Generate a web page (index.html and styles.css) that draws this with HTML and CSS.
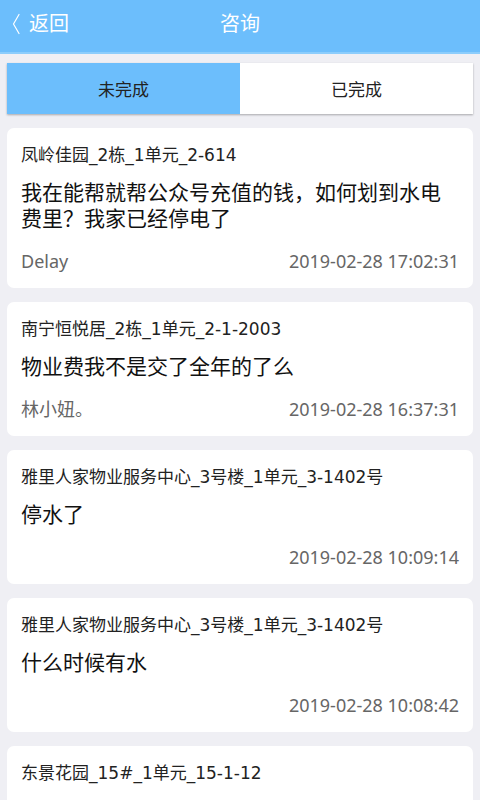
FILE: index.html
```html
<!DOCTYPE html>
<html lang="zh-CN">
<head>
    <meta charset="UTF-8">
    <meta name="viewport" content="width=device-width, initial-scale=1.0">
    <title>咨询</title>
    <link rel="stylesheet" href="styles.css">
</head>
<body>
    <header class="topbar">
        <a class="back" href="#">
            <svg class="back-icon" width="8" height="22" viewBox="0 0 8 22">
                <polyline points="7,1.5 1.5,11 7,20.5" fill="none" stroke="#fff" stroke-width="1.2" stroke-linejoin="round" stroke-linecap="round"/>
            </svg>
            <span>返回</span>
        </a>
        <h1 class="title">咨询</h1>
        <span></span>
    </header>

    <div class="tabs">
        <div class="tab active">未完成</div>
        <div class="tab">已完成</div>
    </div>

    <ul class="list">
        <li class="card">
            <div class="card-title">凤岭佳园_2栋_1单元_2-614</div>
            <div class="card-body">我在能帮就帮公众号充值的钱，如何划到水电费里？我家已经停电了</div>
            <div class="card-foot">
                <span class="author">Delay</span>
                <span class="time">2019-02-28 17:02:31</span>
            </div>
        </li>
        <li class="card">
            <div class="card-title">南宁恒悦居_2栋_1单元_2-1-2003</div>
            <div class="card-body">物业费我不是交了全年的了么</div>
            <div class="card-foot">
                <span class="author">林小妞。</span>
                <span class="time">2019-02-28 16:37:31</span>
            </div>
        </li>
        <li class="card">
            <div class="card-title">雅里人家物业服务中心_3号楼_1单元_3-1402号</div>
            <div class="card-body">停水了</div>
            <div class="card-foot">
                <span class="author"></span>
                <span class="time">2019-02-28 10:09:14</span>
            </div>
        </li>
        <li class="card">
            <div class="card-title">雅里人家物业服务中心_3号楼_1单元_3-1402号</div>
            <div class="card-body">什么时候有水</div>
            <div class="card-foot">
                <span class="author"></span>
                <span class="time">2019-02-28 10:08:42</span>
            </div>
        </li>
        <li class="card">
            <div class="card-title">东景花园_15#_1单元_15-1-12</div>
            <div class="card-body">我们楼下燃气管道漏气了，什么时候会有人来修一下</div>
            <div class="card-foot">
                <span class="author"></span>
                <span class="time">2019-02-28 09:41:05</span>
            </div>
        </li>
    </ul>
</body>
</html>
```

FILE: styles.css
```css
body {
    font-family: "Noto Sans", "Noto Sans CJK SC", sans-serif;
    background-color: #efeff4;
    margin: 0;
    padding: 0;
    color: #222;
    overflow: hidden;
}
.topbar {
    height: 54px;
    background-color: #6cbefc;
    border-bottom: 2px solid #8ccdfc;
    box-sizing: border-box;
    display: grid;
    grid-template-columns: 1fr auto 1fr;
    align-items: center;
    padding: 0 12px;
}
.back {
    display: flex;
    align-items: center;
    gap: 9px;
    color: #fff;
    text-decoration: none;
    font-size: 20px;
    line-height: 26px;
    padding-bottom: 4px;
}
.title {
    margin: 0;
    color: #fff;
    font-size: 20px;
    font-weight: normal;
    line-height: 26px;
    padding-bottom: 4px;
}
.tabs {
    margin: 9px 7px 0;
    height: 51px;
    display: flex;
    background: #fff;
    box-shadow: 0 1px 2px rgba(0, 0, 0, 0.3);
}
.tab {
    flex: 1;
    display: flex;
    align-items: center;
    justify-content: center;
    font-size: 17px;
    color: #222;
}
.tab.active {
    background-color: #6cbefc;
}
.list {
    list-style: none;
    margin: 0;
    padding: 14px 7px;
    display: flex;
    flex-direction: column;
    gap: 14px;
}
.card {
    background: #fff;
    border-radius: 7px;
    padding: 14px 14px 15px;
}
.card-title {
    font-family: "DejaVu Sans", "Noto Sans CJK SC", sans-serif;
    font-size: 17px;
    line-height: 26px;
    color: #222;
}
.card-body {
    margin-top: 11px;
    font-size: 21px;
    line-height: 26px;
    color: #111;
}
.card-foot {
    margin-top: 18px;
    display: flex;
    justify-content: space-between;
    font-size: 18px;
    line-height: 24px;
    color: #666;
}
```
